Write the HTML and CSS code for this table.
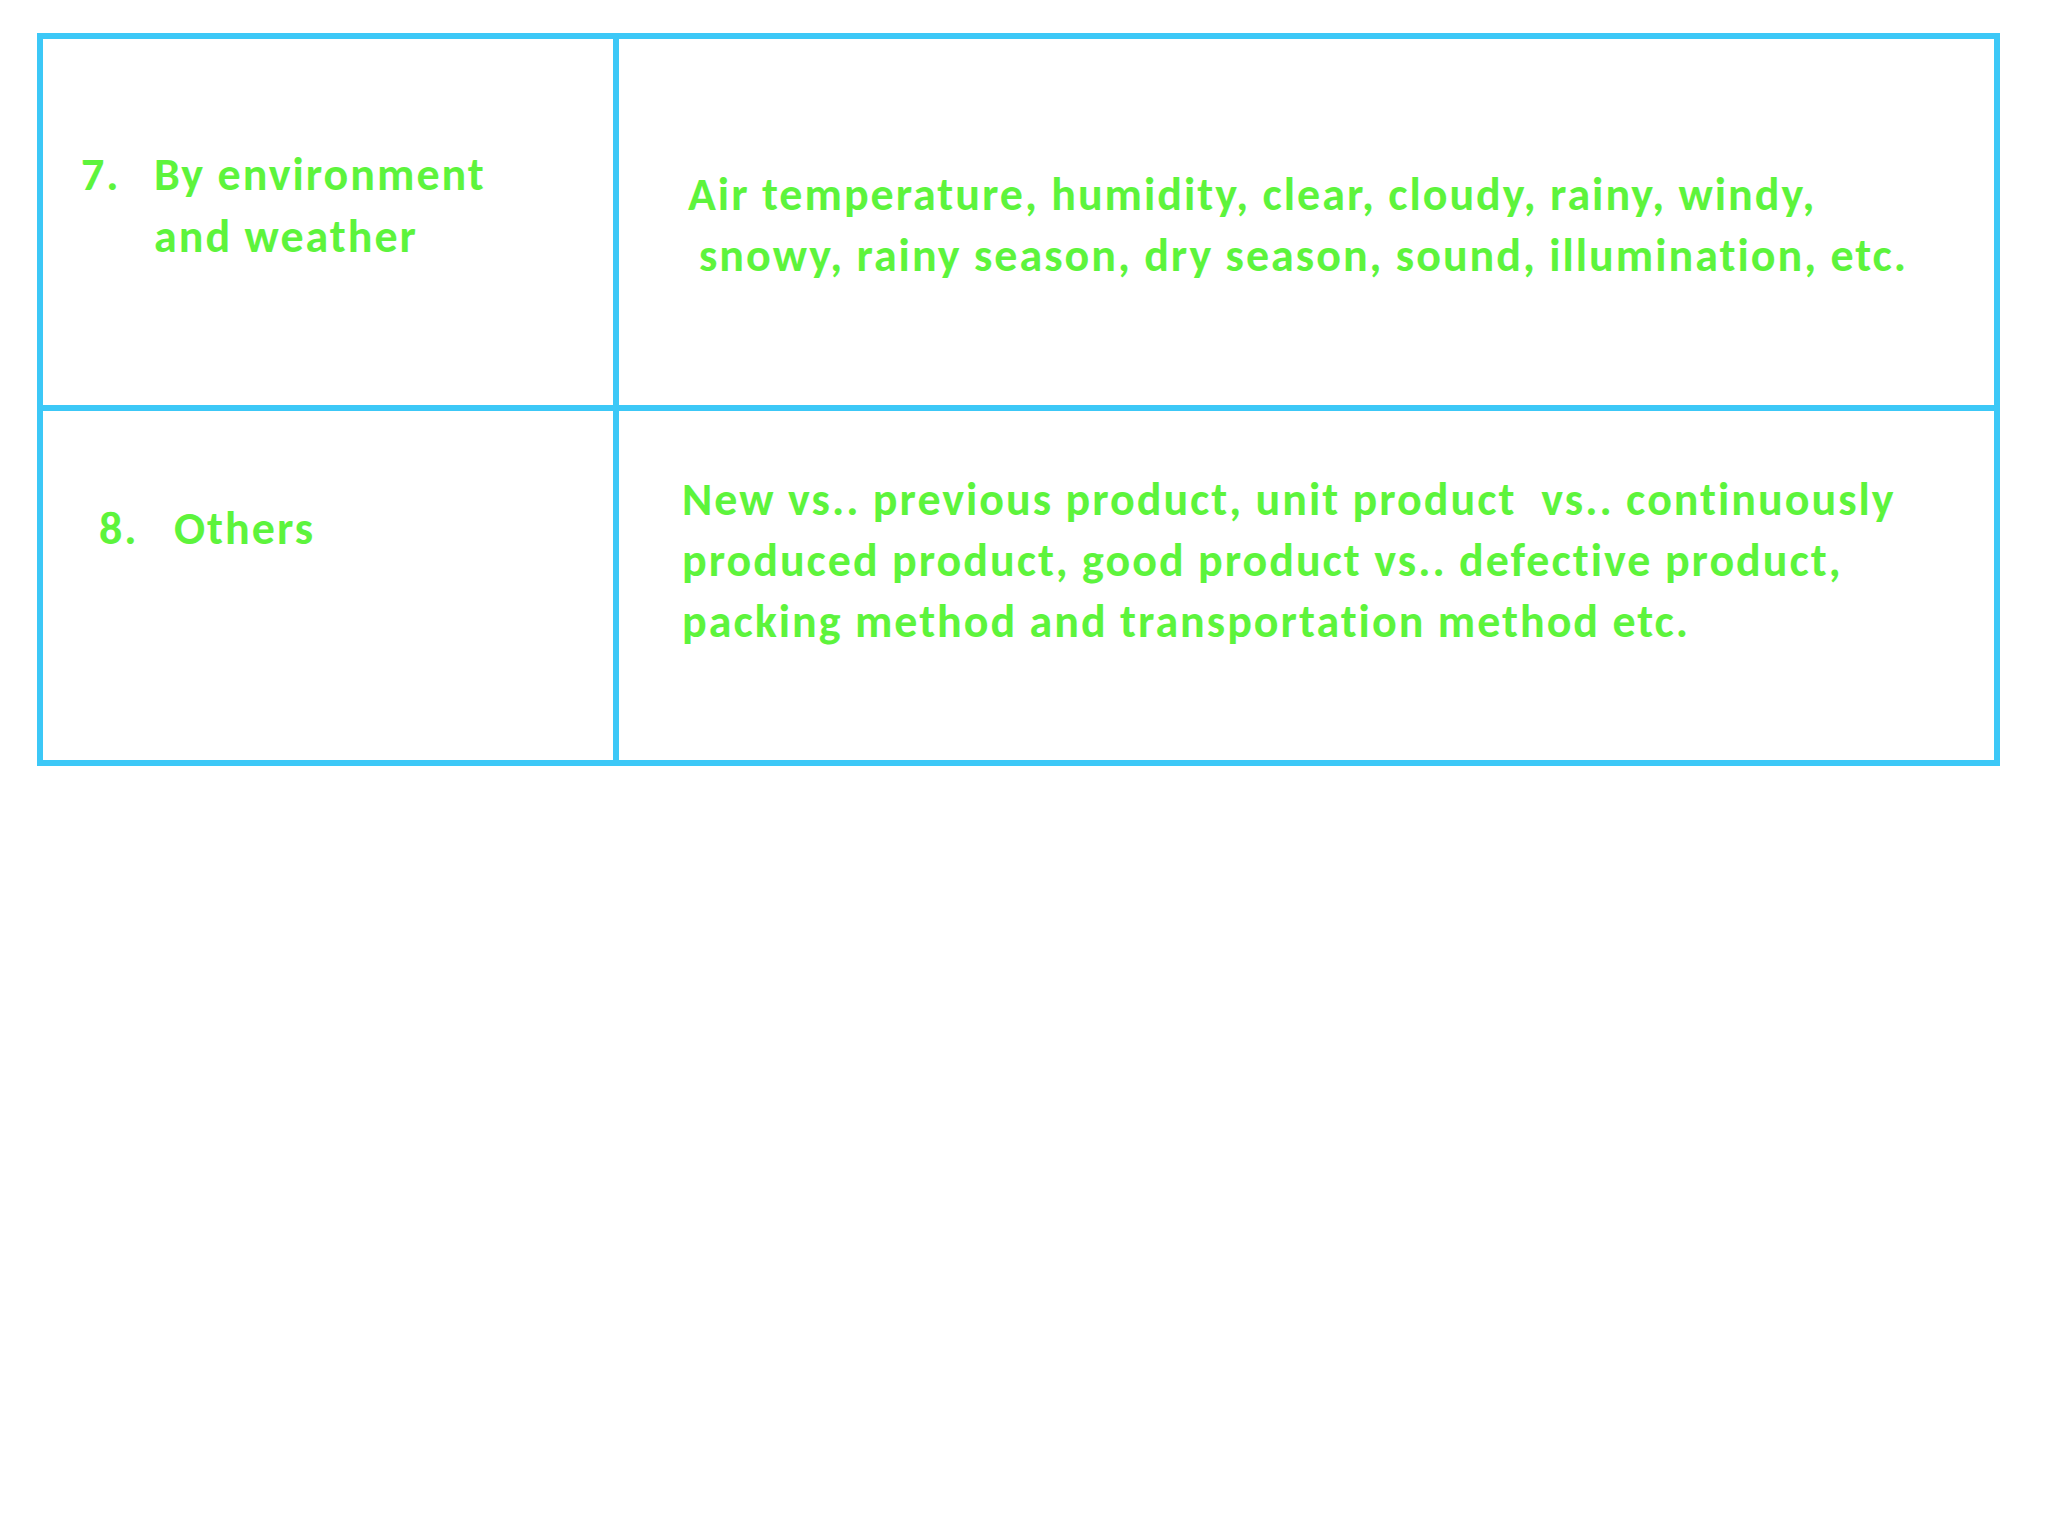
FILE: index.html
```html
<!DOCTYPE html>
<html>
<head>
<meta charset="utf-8">
<link rel="stylesheet" href="styles.css">
</head>
<body>
<div class="sheet">
  <div class="grid">
    <div class="cell left r1">
      <div class="item">
        <span class="num">7.</span>
        <span class="label">By environment<br>and weather</span>
      </div>
    </div>
    <div class="cell right r1">
      <span class="line">Air temperature, humidity, clear, cloudy, rainy, windy,</span>
      <span class="line indent">snowy, rainy season, dry season, sound, illumination, etc.</span>
    </div>
    <div class="cell left r2">
      <div class="item item8">
        <span class="num">8.</span>
        <span class="label">Others</span>
      </div>
    </div>
    <div class="cell right r2">
      <span class="line">New vs.. previous product, unit product &nbsp;vs.. continuously</span>
      <span class="line">produced product, good product vs.. defective product,</span>
      <span class="line">packing method and transportation method etc.</span>
    </div>
  </div>
</div>
</body>
</html>
```

FILE: styles.css
```css
html, body {
  margin: 0;
  padding: 0;
  background: #ffffff;
}

.sheet {
  width: 2048px;
  height: 1536px;
  padding: 33px 0 0 37px;
  box-sizing: border-box;
}

.grid {
  display: grid;
  grid-template-columns: 576px 1381px;
  grid-template-rows: 372px 355px;
  width: 1963px;
  border-top: 6px solid #3cc8f7;
  border-left: 6px solid #3cc8f7;
  box-sizing: border-box;
  font-family: Carlito, Lato, "Liberation Sans", sans-serif;
  font-weight: bold;
  font-size: 46px;
  letter-spacing: 2px;
  font-variant-ligatures: none;
  line-height: 61px;
  color: #5df43c;
}

.cell {
  border-right: 6px solid #3cc8f7;
  border-bottom: 6px solid #3cc8f7;
  background: #ffffff;
  box-sizing: border-box;
}

.cell.left.r1 { padding: 104px 0 0 38px; line-height: 62px; }
.cell.right.r1 { padding: 125px 0 0 69px; }
.cell.left.r2 { padding: 87px 0 0 56px; }
.cell.right.r2 { padding: 58px 0 0 63px; }

.item {
  display: flex;
}

.num {
  width: 73px;
  flex: none;
}

.item8 .num {
  width: 75px;
}

.line {
  display: block;
  white-space: nowrap;
}

.line.indent {
  padding-left: 11px;
}
```
